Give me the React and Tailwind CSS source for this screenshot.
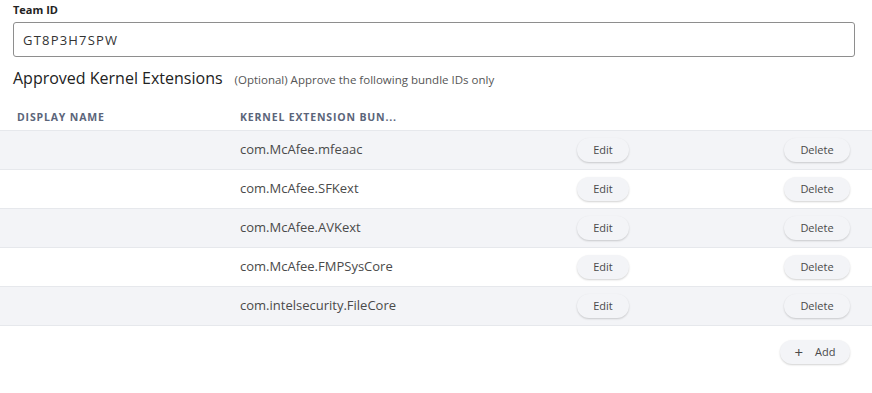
import React from 'react';

const bundles = [
  'com.McAfee.mfeaac',
  'com.McAfee.SFKext',
  'com.McAfee.AVKext',
  'com.McAfee.FMPSysCore',
  'com.intelsecurity.FileCore',
];

function PillButton({ children, className = '' }) {
  return (
    <button
      type="button"
      className={`h-[24px] rounded-full bg-[#f3f4f7] text-[11px] text-[#4a4a4a] shadow-[0_1px_2px_rgba(0,0,0,0.18)] ${className}`}
    >
      {children}
    </button>
  );
}

export default function App() {
  return (
    <div className="w-[872px] h-[393px] bg-white font-['Open_Sans',sans-serif] text-[#333] overflow-hidden">
      <div className="pl-[13px] pr-[17px] pt-[2px]">
        <label className="block text-[11px] font-bold text-[#222] leading-[15px]">Team ID</label>
        <input
          type="text"
          defaultValue="GT8P3H7SPW"
          className="mt-[5px] w-full h-[35px] rounded-[3px] border border-[#8e8e8e] px-[9px] text-[13px] tracking-[1.2px] text-[#333] focus:outline-none"
        />
        <div className="mt-[10px] flex items-baseline gap-[12px]">
          <h2 className="text-[16px] text-[#222] leading-[22px]">Approved Kernel Extensions</h2>
          <span className="text-[11.5px] text-[#555]">(Optional) Approve the following bundle IDs only</span>
        </div>
      </div>

      <div className="mt-[17px]">
        <div className="flex h-[24px] items-start pt-[5px] leading-[12px] text-[10.5px] font-bold tracking-[0.08em] text-[#5b657a]">
          <div className="w-[240px] pl-[17px]">DISPLAY NAME</div>
          <div>KERNEL EXTENSION BUN...</div>
        </div>
        <div className="border-t border-[#e6e8ec]">
          {bundles.map((b, i) => (
            <div
              key={b}
              className={`flex h-[39px] items-center border-b border-[#e6e8ec] ${i % 2 === 0 ? 'bg-[#f3f4f7]' : 'bg-white'}`}
            >
              <div className="w-[240px]" />
              <div className="w-[337px] text-[13px] text-[#4a4a4a]">{b}</div>
              <PillButton className="w-[52px]">Edit</PillButton>
              <div className="flex-1" />
              <PillButton className="w-[66px] mr-[22px]">Delete</PillButton>
            </div>
          ))}
        </div>
        <div className="flex justify-end pt-[14px] pr-[22px]">
          <PillButton className="w-[70px] flex items-center justify-center gap-[12px]">
            <span className="text-[15px] leading-none">+</span>
            <span>Add</span>
          </PillButton>
        </div>
      </div>
    </div>
  );
}
